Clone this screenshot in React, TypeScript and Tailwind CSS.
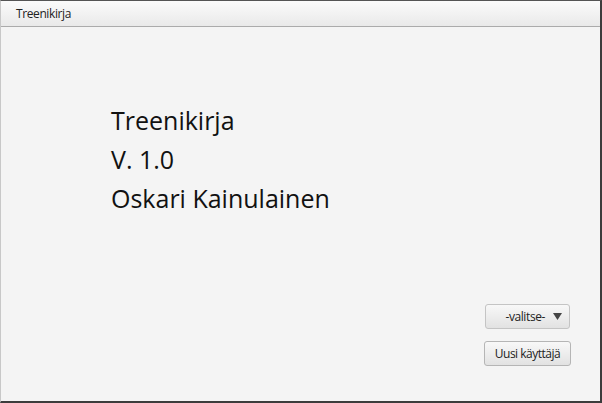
import React from "react";

export default function App() {
  return (
    <div
      className="w-[602px] h-[403px] bg-[#f4f4f4] flex flex-col border-t border-t-[#555] border-l border-l-[#c8c8c8] border-r-2 border-r-[#3c3c3c] border-b-2 border-b-[#3c3c3c] overflow-hidden"
      style={{ fontFamily: '"Open Sans", "Noto Sans", sans-serif' }}
    >
      <div className="h-[26px] shrink-0 flex items-center pl-[15px] bg-gradient-to-b from-[#fbfbfb] to-[#e9e9e9] border-b border-b-[#ababab] text-[12px] tracking-[-0.4px] text-[#222]">
        Treenikirja
      </div>
      <div className="flex-1 flex flex-col">
        <div className="pl-[110px] pt-[74px] text-[25px] leading-[39px] text-[#111]">
          <div>Treenikirja</div>
          <div>V. 1.0</div>
          <div>Oskari Kainulainen</div>
        </div>
        <div className="flex-1" />
        <div className="flex flex-col items-end pr-[30px] pb-[35px] gap-[12px]">
          <div className="w-[85px] h-[25px] flex items-center justify-end gap-[8px] pr-[7px] rounded-[3px] border border-[#c4c4c4] bg-gradient-to-b from-[#f8f8f8] to-[#e2e2e2] text-[12px] tracking-[-0.4px] text-[#222]">
            <span>-valitse-</span>
            <svg width="9" height="7" viewBox="0 0 9 7">
              <path d="M0 0 H9 L4.5 7 Z" fill="#444" />
            </svg>
          </div>
          <div className="w-[87px] h-[25px] mr-[-1px] flex items-center justify-center rounded-[3px] border border-[#b5b5b5] bg-gradient-to-b from-[#f8f8f8] to-[#e2e2e2] text-[12px] tracking-[-0.5px] text-[#222]">
            Uusi käyttäjä
          </div>
        </div>
      </div>
    </div>
  );
}
